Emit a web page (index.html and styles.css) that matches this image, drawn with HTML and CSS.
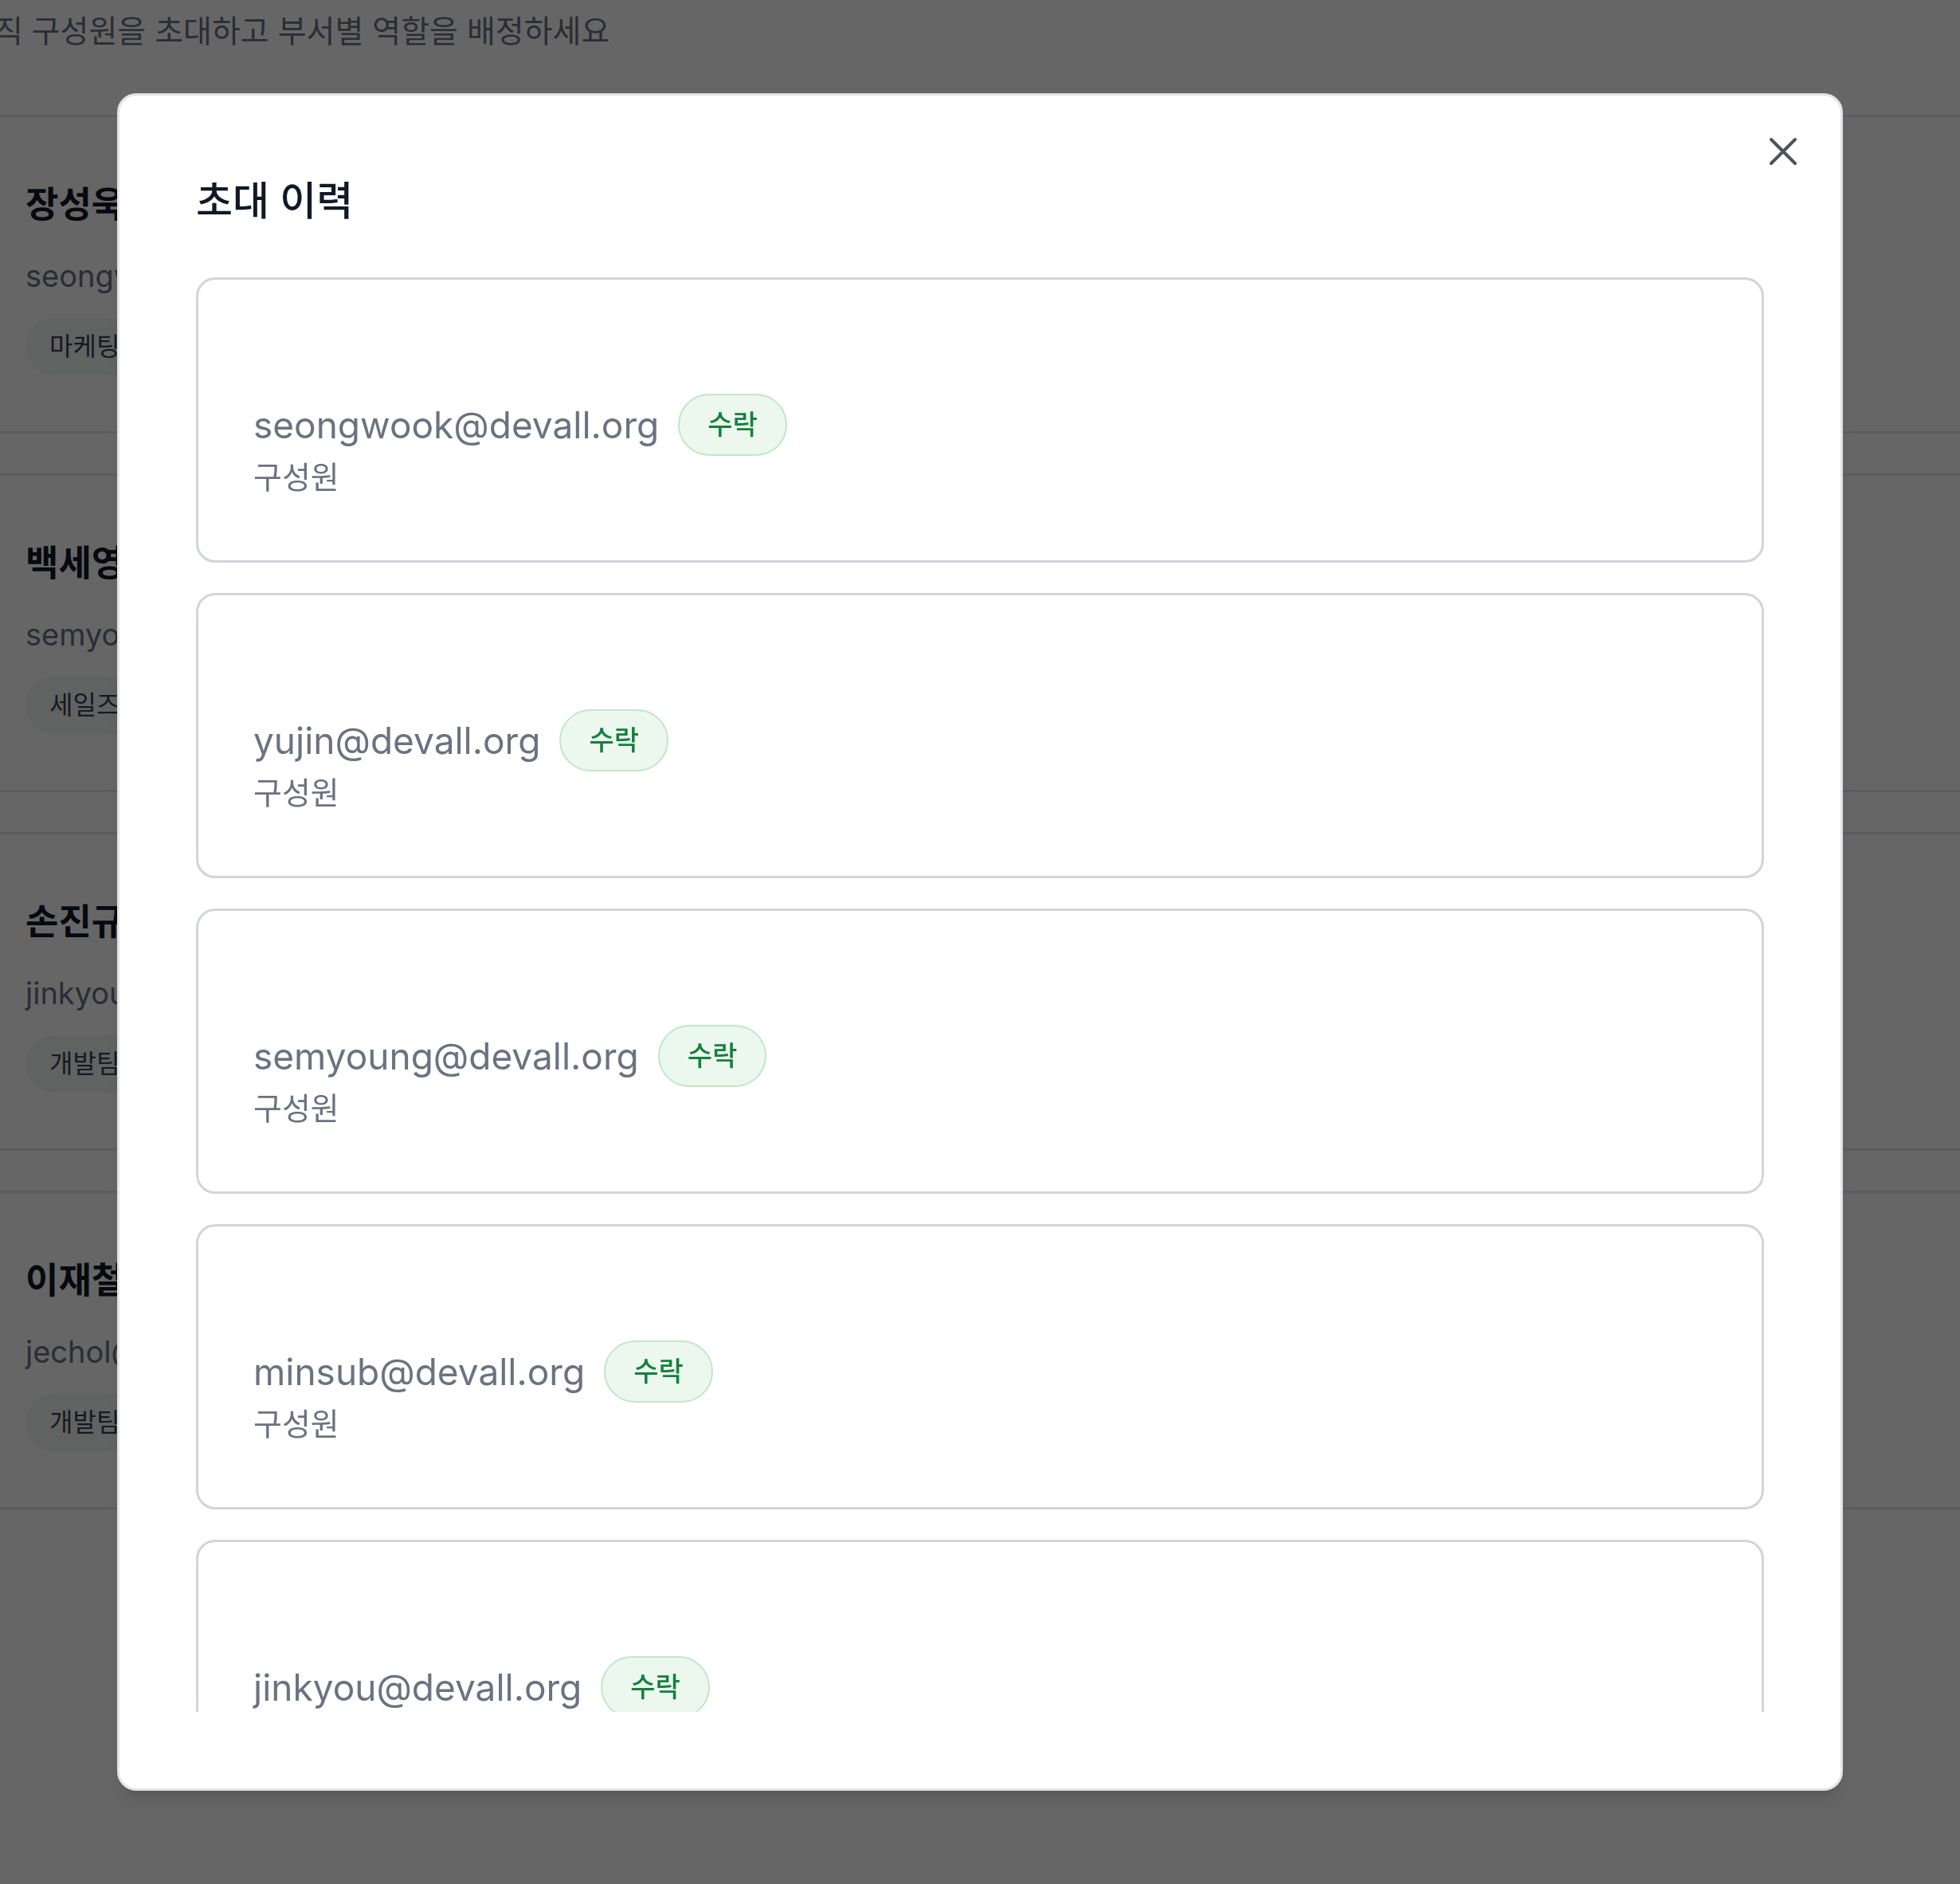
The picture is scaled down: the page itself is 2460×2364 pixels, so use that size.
FILE: index.html
```html
<!DOCTYPE html>
<html lang="ko">
<head>
    <meta charset="UTF-8">
    <meta name="viewport" content="width=device-width, initial-scale=1.0">
    <title>구성원 관리</title>
    <link rel="stylesheet" href="styles.css">
</head>
<body>
    <main class="page">
        <p class="page-desc">조직 구성원을 초대하고 부서별 역할을 배정하세요</p>

        <ul class="member-list">
            <li class="member">
                <h3 class="member-name">장성욱</h3>
                <p class="member-email">seongwook@devall.org</p>
                <span class="dept-tag">마케팅팀</span>
            </li>
            <li class="member">
                <h3 class="member-name">백세영</h3>
                <p class="member-email">semyoung@devall.org</p>
                <span class="dept-tag">세일즈팀</span>
            </li>
            <li class="member">
                <h3 class="member-name">손진규</h3>
                <p class="member-email">jinkyou@devall.org</p>
                <span class="dept-tag">개발팀</span>
            </li>
            <li class="member">
                <h3 class="member-name">이재철</h3>
                <p class="member-email">jechol@devall.org</p>
                <span class="dept-tag">개발팀</span>
            </li>
        </ul>
    </main>

    <div class="modal-backdrop">
        <div class="modal" role="dialog" aria-labelledby="inviteHistoryTitle">
            <button class="close-btn" aria-label="닫기">
                <svg width="36" height="36" viewBox="0 0 36 36" fill="none" stroke="currentColor" stroke-width="4" stroke-linecap="round">
                    <path d="M3 3 33 33M33 3 3 33"/>
                </svg>
            </button>

            <h2 class="modal-title" id="inviteHistoryTitle">초대 이력</h2>

            <ul class="invite-list">
                <li class="invite-item">
                    <div class="invite-row">
                        <span class="invite-email">seongwook@devall.org</span>
                        <span class="status-badge">수락</span>
                    </div>
                    <p class="invite-role">구성원</p>
                </li>
                <li class="invite-item">
                    <div class="invite-row">
                        <span class="invite-email">yujin@devall.org</span>
                        <span class="status-badge">수락</span>
                    </div>
                    <p class="invite-role">구성원</p>
                </li>
                <li class="invite-item">
                    <div class="invite-row">
                        <span class="invite-email">semyoung@devall.org</span>
                        <span class="status-badge">수락</span>
                    </div>
                    <p class="invite-role">구성원</p>
                </li>
                <li class="invite-item">
                    <div class="invite-row">
                        <span class="invite-email">minsub@devall.org</span>
                        <span class="status-badge">수락</span>
                    </div>
                    <p class="invite-role">구성원</p>
                </li>
                <li class="invite-item">
                    <div class="invite-row">
                        <span class="invite-email">jinkyou@devall.org</span>
                        <span class="status-badge">수락</span>
                    </div>
                    <p class="invite-role">구성원</p>
                </li>
                <li class="invite-item">
                    <div class="invite-row">
                        <span class="invite-email">jechol@devall.org</span>
                        <span class="status-badge">수락</span>
                    </div>
                    <p class="invite-role">구성원</p>
                </li>
            </ul>
        </div>
    </div>
</body>
</html>
```

FILE: styles.css
```css
* {
    box-sizing: border-box;
}
body {
    margin: 0;
    font-family: Inter, "Noto Sans CJK KR", sans-serif;
    background: #fff;
    color: #111827;
}

/* page behind the dialog */
.page {
    padding-top: 10px;
}
.page-desc {
    margin: 0 0 76px -43px;
    font-size: 39px;
    line-height: 58px;
    color: #6b7280;
    white-space: nowrap;
}
.member-list {
    list-style: none;
    margin: 0;
    padding: 0;
}
.member {
    display: flex;
    flex-direction: column;
    align-items: flex-start;
    padding: 78px 32px 70px;
    margin-bottom: 50px;
    border-top: 3px solid #e5e7eb;
    border-bottom: 3px solid #e5e7eb;
}
.member-name {
    margin: 0;
    font-size: 45px;
    line-height: 63px;
    font-weight: 700;
}
.member-email {
    margin: 30px 0 0;
    font-size: 38px;
    line-height: 57px;
    color: #6b7280;
}
.dept-tag {
    margin-top: 24px;
    padding: 12px 30px;
    font-size: 32px;
    line-height: 48px;
    background: #f3f4f6;
    color: #374151;
    border-radius: 999px;
}

/* dialog */
.modal-backdrop {
    position: fixed;
    inset: 0;
    background: rgba(0, 0, 0, 0.6);
    display: flex;
    align-items: center;
    justify-content: center;
}
.modal {
    position: relative;
    width: 2166px;
    height: 2130px;
    padding: 96px;
    display: flex;
    flex-direction: column;
    background: #fff;
    border: 3px solid #e3e4e8;
    border-radius: 24px;
    box-shadow: 0 20px 25px -5px rgba(0, 0, 0, 0.1), 0 8px 10px -6px rgba(0, 0, 0, 0.1);
}
.close-btn {
    position: absolute;
    top: 52px;
    right: 54px;
    width: 36px;
    height: 36px;
    padding: 0;
    border: none;
    background: none;
    color: #52525b;
    cursor: pointer;
}
.close-btn svg {
    display: block;
}
.modal-title {
    margin: 0 0 60px;
    font-size: 50px;
    line-height: 72px;
    font-weight: 500;
    color: #111827;
}
.invite-list {
    list-style: none;
    margin: 0;
    padding: 0;
    flex: 1;
    min-height: 0;
    overflow-y: auto;
    scrollbar-width: none;
    display: flex;
    flex-direction: column;
    gap: 38px;
}
.invite-item {
    flex-shrink: 0;
    padding: 143px 69px 77px;
    border: 3px solid #d1d5db;
    border-radius: 24px;
}
.invite-row {
    display: flex;
    align-items: center;
    gap: 24px;
}
.invite-email {
    font-size: 46px;
    line-height: 69px;
    color: #6b7280;
}
.status-badge {
    padding: 12px 35px;
    font-size: 34px;
    line-height: 50px;
    font-weight: 500;
    color: #15803d;
    background: #ecf7ee;
    border: 2px solid #c3e6c9;
    border-radius: 999px;
}
.invite-role {
    margin: 0;
    font-size: 39px;
    line-height: 54px;
    color: #6b7280;
}
```
